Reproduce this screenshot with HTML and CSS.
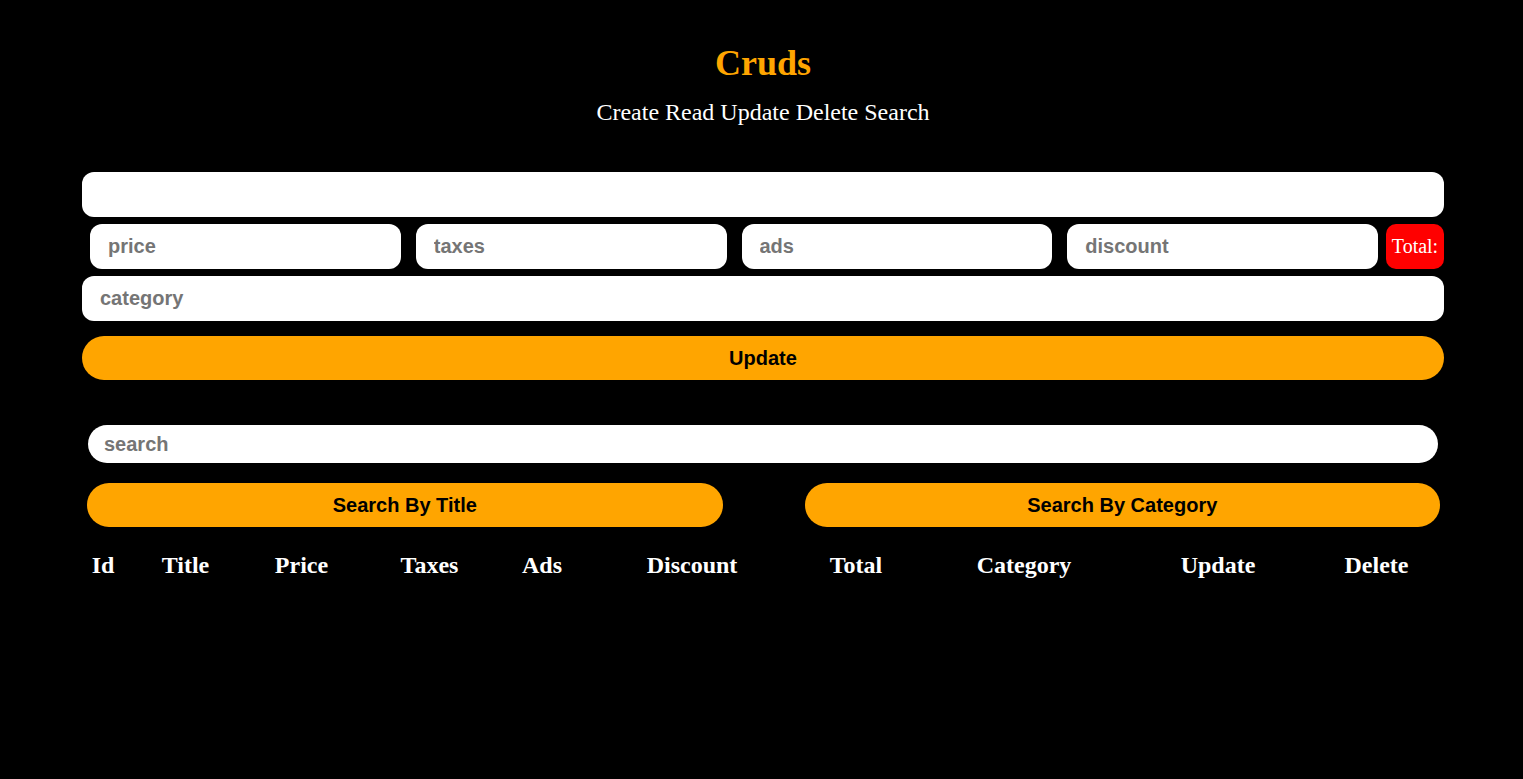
FILE: index.html
```html
<!DOCTYPE html>
<html lang="en">
<head>
<meta charset="utf-8">
<meta name="viewport" content="width=device-width, initial-scale=1">
<title>Cruds</title>
<link rel="stylesheet" href="styles.css">
</head>
<body>
<main class="container">
  <header class="head">
    <h1 class="head-title">Cruds</h1>
    <p class="head-text">Create Read Update Delete Search</p>
  </header>
  <form class="product-form">
    <input class="field" type="text" aria-label="title">
    <div class="price-row">
      <input class="field" type="text" placeholder="price" aria-label="price">
      <input class="field" type="text" placeholder="taxes" aria-label="taxes">
      <input class="field" type="text" placeholder="ads" aria-label="ads">
      <input class="field" type="text" placeholder="discount" aria-label="discount">
      <output class="total">Total:</output>
    </div>
    <input class="field" type="text" placeholder="category" aria-label="category">
    <button class="btn btn-update" type="button">Update</button>
  </form>
  <section class="search-area">
    <input class="field search-field" type="text" placeholder="search" aria-label="search">
    <div class="search-buttons">
      <button class="btn" type="button">Search By Title</button>
      <button class="btn" type="button">Search By Category</button>
    </div>
  </section>
  <table class="products">
    <colgroup>
      <col class="col-id"><col class="col-title"><col class="col-price"><col class="col-taxes"><col class="col-ads"><col class="col-discount"><col class="col-total"><col class="col-category"><col class="col-update"><col class="col-delete">
    </colgroup>
    <thead>
      <tr><th>Id</th><th>Title</th><th>Price</th><th>Taxes</th><th>Ads</th><th>Discount</th><th>Total</th><th>Category</th><th>Update</th><th>Delete</th></tr>
    </thead>
    <tbody></tbody>
  </table>
</main>
</body>
</html>
```
FILE: styles.css
```css
* {
  box-sizing: border-box;
}

body {
  margin: 0;
  background: #000;
  color: #fff;
  font-family: "Liberation Serif", "Times New Roman", serif;
}

.container {
  margin: 0 79px 0 82px;
  padding-top: 42px;
}

.head {
  text-align: center;
}

.head-title {
  margin: 0;
  color: orange;
  font-size: 36px;
  line-height: 42px;
}

.head-text {
  margin: 15px 0 46px;
  font-size: 24px;
  line-height: 27px;
}

.product-form {
  display: flex;
  flex-direction: column;
  gap: 7px;
}

.field {
  width: 100%;
  min-width: 0;
  height: 45px;
  padding: 0 18px;
  border: 0;
  border-radius: 12px;
  background: #fff;
  color: #000;
  font: bold 20px "Liberation Sans", Arial, sans-serif;
}

.field::placeholder {
  color: #757575;
}

.price-row {
  display: flex;
  gap: 15px;
  padding-left: 8px;
}

.price-row .field {
  flex: 1;
}

.total {
  flex: none;
  width: 58px;
  margin-left: -7px;
  border-radius: 10px;
  background: red;
  font-size: 20px;
  line-height: 45px;
  text-align: center;
}

.btn {
  height: 44px;
  padding: 0;
  border: 0;
  border-radius: 22px;
  background: orange;
  color: #000;
  font: bold 20px "Liberation Sans", Arial, sans-serif;
}

.btn-update {
  margin-top: 8px;
}

.search-area {
  margin: 45px 4px 0 5px;
}

.search-field {
  display: block;
  width: calc(100% - 3px);
  height: 38px;
  margin: 0 2px 0 1px;
  padding: 0 16px;
  border-radius: 19px;
}

.search-buttons {
  display: flex;
  gap: 82px;
  margin-top: 20px;
}

.search-buttons .btn {
  flex: 1;
}

.products {
  width: 100%;
  margin-top: 22px;
  border-collapse: collapse;
  table-layout: fixed;
}

.products th {
  padding: 0;
  font-size: 24px;
  line-height: 32px;
}

.products th:first-child {
  padding-right: 12px;
}

.col-id { width: 54px; }
.col-title { width: 99px; }
.col-price { width: 133px; }
.col-taxes { width: 123px; }
.col-ads { width: 102px; }
.col-discount { width: 198px; }
.col-total { width: 130px; }
.col-category { width: 206px; }
.col-update { width: 182px; }
.col-delete { width: 135px; }
```
